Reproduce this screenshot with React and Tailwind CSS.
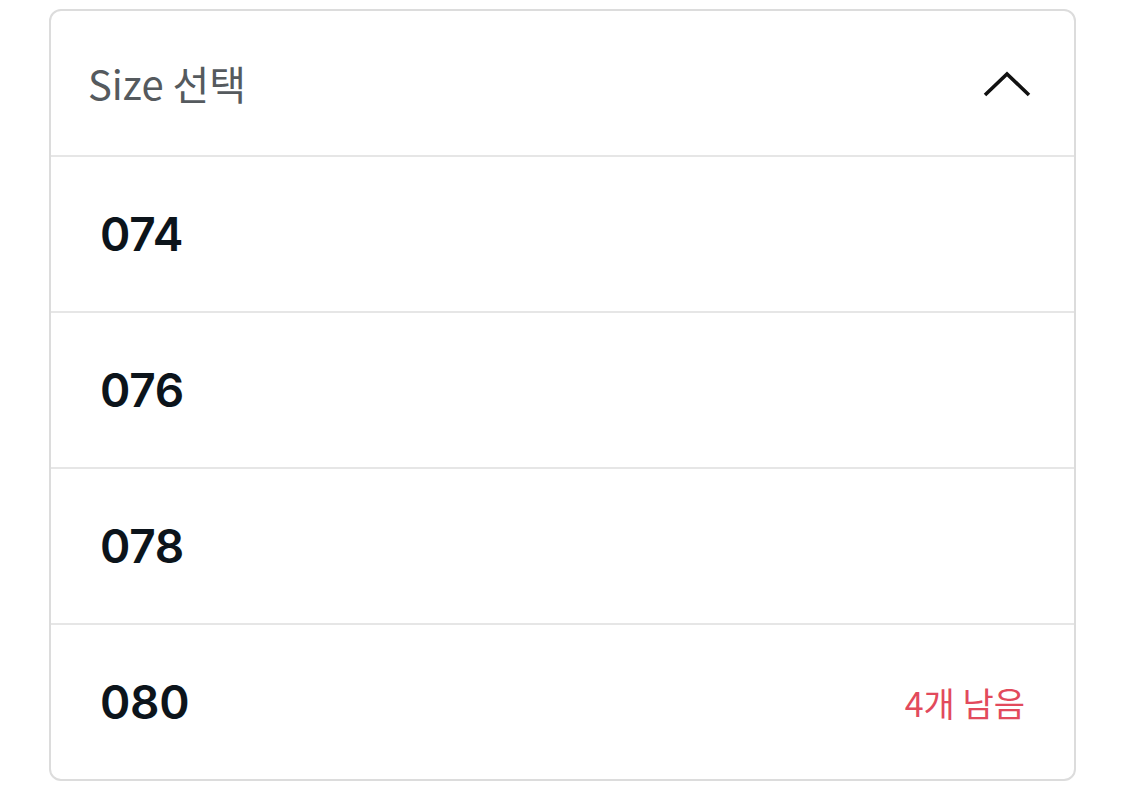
import React from 'react';

const sizes = [
  { label: '074' },
  { label: '076' },
  { label: '078' },
  { label: '080', note: '4개 남음' },
];

const App = () => {
  return (
    <div className="w-[1125px] h-[806px] bg-white pt-[9px] px-[49px] font-['Noto_Sans','Noto_Sans_CJK_KR',sans-serif]">
      <div className="border-2 border-[#dcdcdc] rounded-[12px] overflow-hidden flex flex-col">
        <div className="h-[146px] shrink-0 flex items-center justify-between pl-[37px] pr-[43px] border-b-2 border-[#e6e6e6]">
          <span className="text-[40px] text-[#555a5e] font-['Noto_Sans_CJK_KR',sans-serif]">Size 선택</span>
          <svg width="48" height="26" viewBox="0 0 48 26" fill="none" className="mt-[2px]">
            <path d="M2 24 L24 3 L46 24" stroke="#111" strokeWidth="3.6" strokeLinejoin="miter" />
          </svg>
        </div>
        {sizes.map((s, i) => (
          <div
            key={s.label}
            className={`shrink-0 flex items-center justify-between pl-[49px] pr-[49px] ${i < sizes.length - 1 ? 'h-[156px] border-b-2 border-[#e6e6e6]' : 'h-[154px]'}`}
          >
            <span className="text-[46px] font-semibold text-[#0c141b] font-['Inter',sans-serif] tracking-[-0.3px]">{s.label}</span>
            {s.note && <span className="text-[34px] text-[#e24a5c] font-['Noto_Sans_CJK_KR',sans-serif]">{s.note}</span>}
          </div>
        ))}
      </div>
    </div>
  );
};

export default App;
